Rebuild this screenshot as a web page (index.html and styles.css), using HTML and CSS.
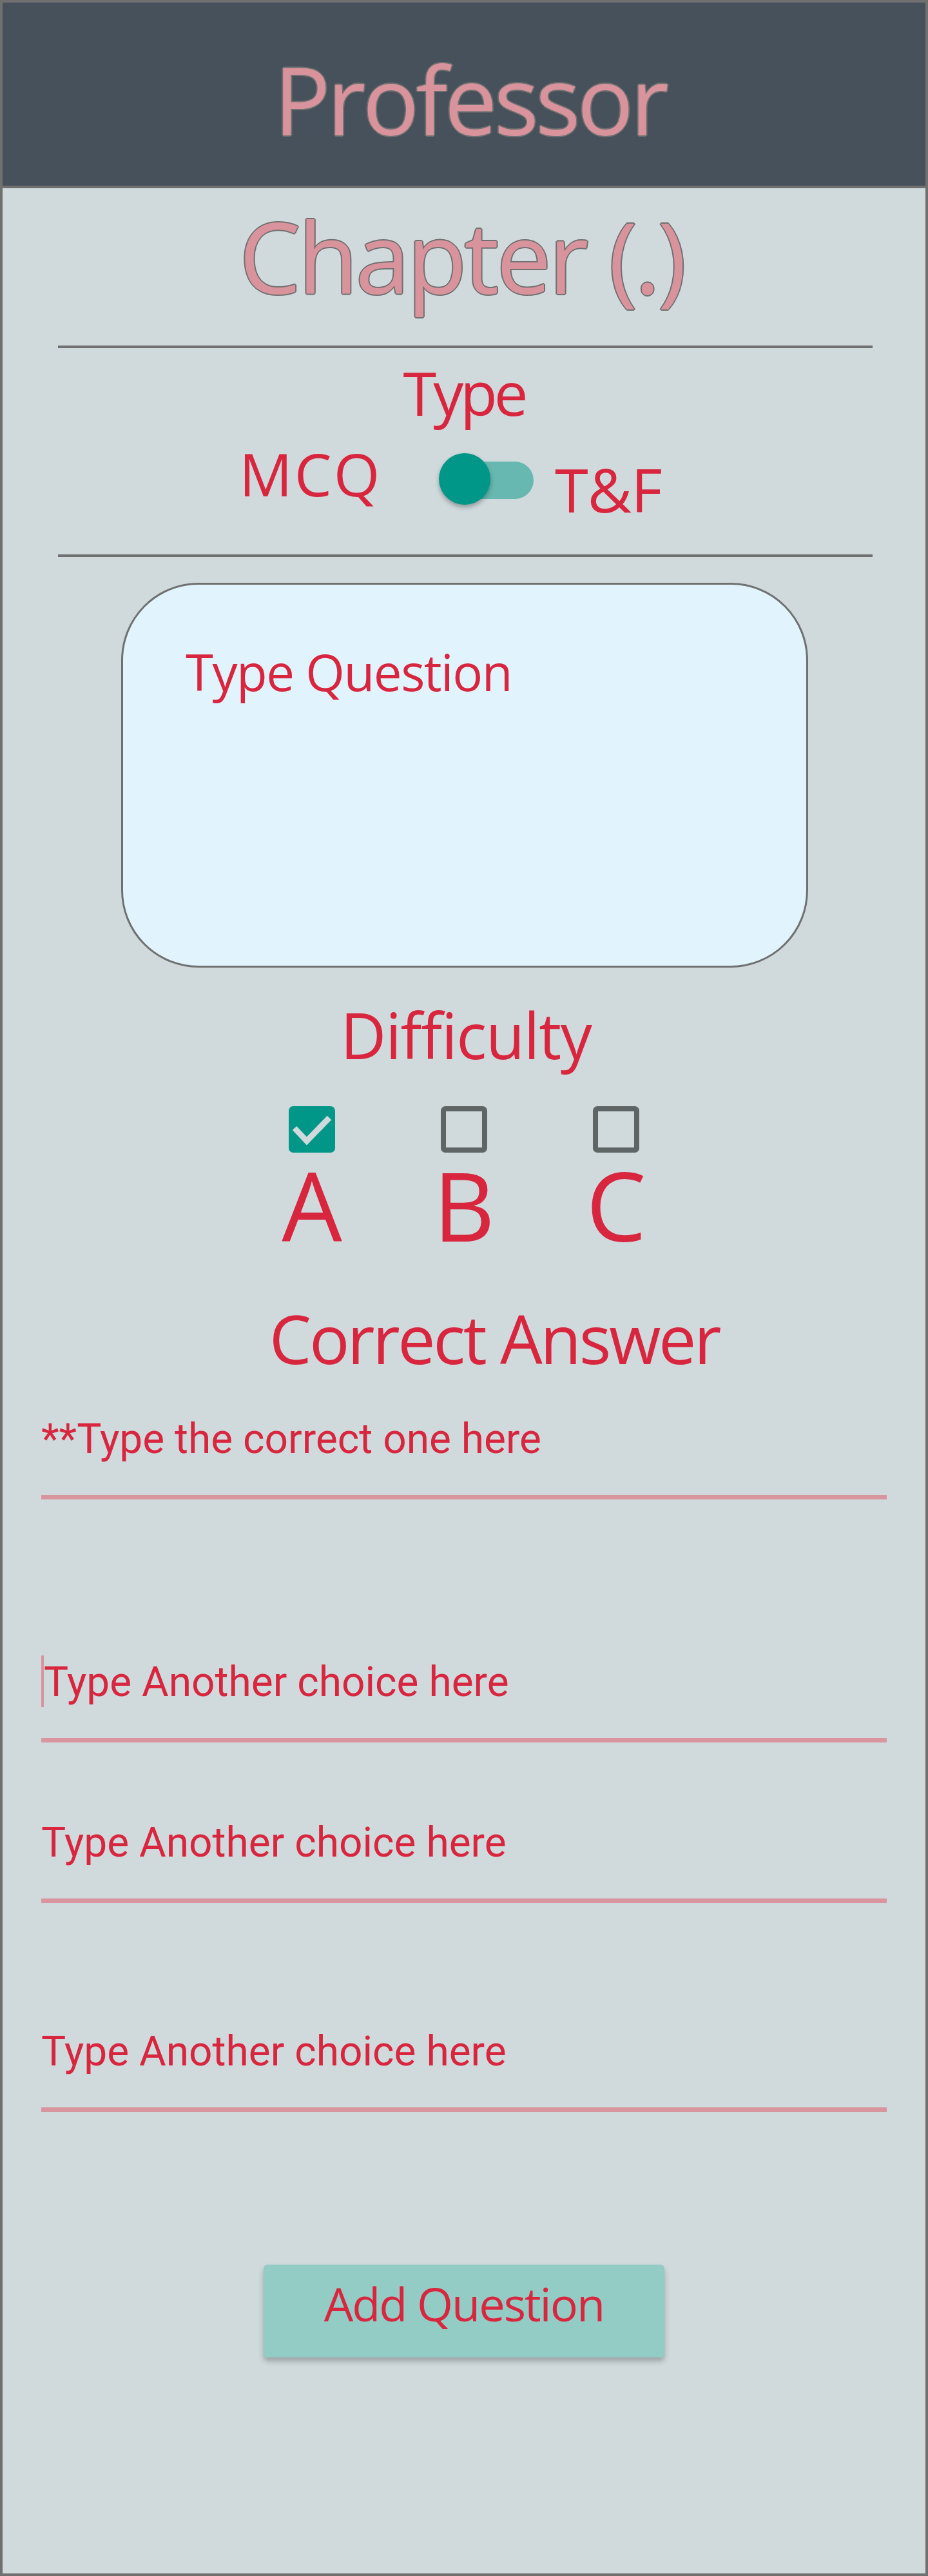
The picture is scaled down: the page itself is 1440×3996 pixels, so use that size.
FILE: index.html
```html
<!DOCTYPE html>
<html lang="en">
<head>
<meta charset="utf-8">
<title>Professor</title>
<link rel="stylesheet" href="styles.css">
</head>
<body>
<div class="frame">
  <header class="header">
    <h1 class="title-pro">Professor</h1>
  </header>
  <main class="content">
    <h2 class="chapter">Chapter (.)</h2>
    <div class="rule rule-top"></div>
    <div class="type-label">Type</div>
    <div class="switch-row">
      <span class="mcq">MCQ</span>
      <div class="toggle">
        <span class="track"></span>
        <span class="thumb"></span>
      </div>
      <span class="tf">T&amp;F</span>
    </div>
    <div class="rule rule-bottom"></div>
    <div class="qbox">
      <div class="qtext">Type Question</div>
    </div>
    <div class="difficulty">Difficulty</div>
    <div class="levels">
      <div class="level">
        <span class="box box-checked">
          <svg width="72" height="72" viewBox="0 0 72 72"><polyline points="9,34 28,54 63,18" fill="none" stroke="#d0dadd" stroke-width="9"/></svg>
        </span>
        <span class="letter">A</span>
      </div>
      <div class="level">
        <span class="box box-empty"></span>
        <span class="letter">B</span>
      </div>
      <div class="level">
        <span class="box box-empty"></span>
        <span class="letter">C</span>
      </div>
    </div>
    <div class="answer-title">Correct Answer</div>
    <div class="field field-1"><span class="ftext">**Type the correct one here</span></div>
    <div class="field field-2"><span class="caret"></span><span class="ftext ftext-shift">Type Another choice here</span></div>
    <div class="field field-3"><span class="ftext">Type Another choice here</span></div>
    <div class="field field-4"><span class="ftext">Type Another choice here</span></div>
    <div class="btn">Add Question</div>
  </main>
</div>
</body>
</html>
```

FILE: styles.css
```css
html, body {
  margin: 0;
  padding: 0;
  background: #d0dadd;
}

.frame {
  width: 1440px;
  height: 3996px;
  box-sizing: border-box;
  border: 4px solid #707070;
  background: #d0dadd;
  overflow: hidden;
  font-family: "Open Sans", "Noto Sans", sans-serif;
  color: #d8263f;
}

.header {
  box-sizing: border-box;
  height: 288px;
  padding-top: 77px;
  background: #47515b;
  border-bottom: 4px solid #707070;
}

.title-pro,
.chapter {
  margin: 0;
  font-weight: 400;
  color: #d9939c;
  text-align: center;
  text-shadow:
    -2px 0 0 #707070, 2px 0 0 #707070, 0 -2px 0 #707070, 0 2px 0 #707070,
    -1px -1px 0 #707070, 1px 1px 0 #707070, -1px 1px 0 #707070, 1px -1px 0 #707070;
}

.title-pro {
  font-size: 146px;
  line-height: 146px;
  letter-spacing: -5px;
  padding-left: 18px;
}

.chapter {
  margin-top: 30px;
  font-size: 152px;
  line-height: 152px;
  letter-spacing: -4.3px;
  padding-right: 8px;
}

.rule {
  height: 4px;
  background: #707070;
  margin-left: 86px;
  margin-right: 82px;
}

.rule-top { margin-top: 62px; }
.rule-bottom { margin-top: 54px; }

.type-label {
  margin-top: 22px;
  font-size: 94px;
  line-height: 94px;
  letter-spacing: -5px;
  text-align: center;
}

.switch-row {
  display: flex;
  align-items: flex-start;
  height: 150px;
  padding-left: 367px;
}

.mcq {
  width: 310px;
  margin-top: 33px;
  font-size: 92px;
  line-height: 92px;
  letter-spacing: 3px;
}

.toggle {
  position: relative;
  width: 147px;
  height: 80px;
  margin-top: 47px;
  margin-right: 33px;
}

.track {
  display: block;
  width: 128px;
  height: 58px;
  margin-left: 19px;
  margin-top: 13px;
  border-radius: 29px;
  background: #66b8b0;
}

.thumb {
  position: absolute;
  left: 0;
  top: 0;
  width: 80px;
  height: 80px;
  border-radius: 50%;
  background: #009688;
  box-shadow: 0 4px 7px rgba(0, 0, 0, 0.3);
}

.tf {
  margin-top: 56px;
  font-size: 94px;
  line-height: 94px;
  letter-spacing: -1px;
}

.qbox {
  box-sizing: border-box;
  width: 1066px;
  height: 597px;
  margin-top: 40px;
  margin-left: 184px;
  padding-top: 96px;
  padding-left: 97px;
  border: 3px solid #707070;
  border-radius: 120px;
  background: #e1f4fe;
}

.qtext {
  font-size: 78px;
  line-height: 78px;
  letter-spacing: -1.5px;
}

.difficulty {
  margin-top: 55px;
  font-size: 98px;
  line-height: 98px;
  letter-spacing: -1.3px;
  text-align: center;
  padding-left: 6px;
}

.levels {
  display: flex;
  justify-content: center;
  margin-top: 62px;
}

.level {
  width: 236px;
  display: flex;
  flex-direction: column;
  align-items: center;
}

.box {
  display: block;
  box-sizing: border-box;
  width: 72px;
  height: 72px;
  border-radius: 7px;
}

.box svg { display: block; }

.box-checked { background: #009688; }

.box-empty { border: 8px solid #5f6565; }

.letter {
  margin-top: 7px;
  font-size: 148px;
  line-height: 148px;
}

.answer-title {
  margin-top: 81px;
  font-size: 104px;
  line-height: 104px;
  letter-spacing: -3.4px;
  text-align: center;
  padding-left: 94px;
}

.field {
  position: relative;
  width: 1312px;
  margin-left: 60px;
  padding-bottom: 54px;
  border-bottom: 7px solid #d8959d;
  font-family: Roboto, "Liberation Sans", sans-serif;
  font-size: 64px;
  line-height: 64px;
}

.ftext { display: block; }
.ftext-shift { padding-left: 4px; }

.field-1 { margin-top: 73px; }
.field-2 { margin-top: 252px; }
.field-3 { margin-top: 124px; }
.field-4 { margin-top: 199px; }

.caret {
  position: absolute;
  left: 0;
  top: -10px;
  width: 4px;
  height: 80px;
  background: #d8959d;
}

.btn {
  box-sizing: border-box;
  width: 622px;
  height: 144px;
  margin-top: 237px;
  margin-left: 405px;
  padding-top: 24px;
  border-radius: 6px;
  background: #93cbc5;
  box-shadow: 0 6px 8px rgba(0, 0, 0, 0.25);
  font-size: 72px;
  line-height: 72px;
  letter-spacing: -2px;
  text-align: center;
}
```
